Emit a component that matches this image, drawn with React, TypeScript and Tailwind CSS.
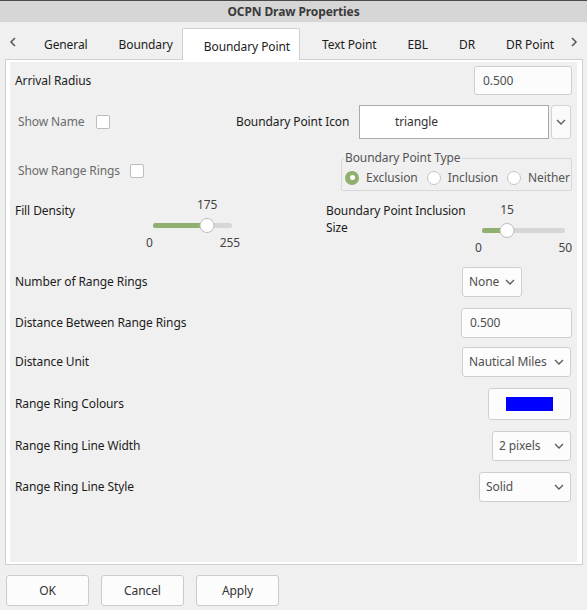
import React from 'react';

const Chevron = () => (
  <svg width="10" height="6" viewBox="0 0 10 6" className="shrink-0">
    <path d="M1 1l4 4 4-4" fill="none" stroke="#5a5a5a" strokeWidth="1.3" />
  </svg>
);

const TabArrow = ({ dir }: { dir: 'left' | 'right' }) => (
  <svg width="8" height="10" viewBox="0 0 8 10">
    <path d={dir === 'left' ? 'M6 1L2 5l4 4' : 'M2 1l4 4-4 4'} fill="none" stroke="#555" strokeWidth="1.5" />
  </svg>
);

const Select = ({ value, className }: { value: string; className: string }) => (
  <div className={`h-[30px] flex items-center justify-between pl-[6px] pr-[6px] bg-[#fcfcfc] border border-[#cfcfcf] rounded-[3px] text-[#505050] ${className}`}>
    <span>{value}</span>
    <Chevron />
  </div>
);

const TextInput = ({ value, className }: { value: string; className: string }) => (
  <div className={`flex items-center pl-[8px] bg-[#fcfcfc] border border-[#cfcfcf] rounded-[3px] text-[#505050] ${className}`}>
    {value}
  </div>
);

const Checkbox = () => (
  <div className="w-[14px] h-[14px] bg-white border border-[#bdbdbd] rounded-[2px] shrink-0" />
);

const Radio = ({ label, checked }: { label: string; checked?: boolean }) => (
  <div className="flex items-center">
    {checked ? (
      <div className="w-[14px] h-[14px] rounded-full bg-[#8fb06f] flex items-center justify-center">
        <div className="w-[5px] h-[5px] rounded-full bg-white" />
      </div>
    ) : (
      <div className="w-[14px] h-[14px] rounded-full bg-white border border-[#c4c4c4]" />
    )}
    <span className="ml-[7px] text-[#555]">{label}</span>
  </div>
);

const Slider = ({ value, min, max, className, trackClass }: { value: number; min: number; max: number; className: string; trackClass: string }) => {
  const pct = `${((value - min) / (max - min)) * 100}%`;
  return (
    <div className={`flex flex-col text-[#444] ${className}`}>
      <div className={`relative h-[14px] ml-[4px] ${trackClass}`}>
        <span className="absolute top-0 -translate-x-1/2 leading-[14px]" style={{ left: pct }}>{value}</span>
      </div>
      <div className={`relative h-[15px] ml-[4px] mt-[6px] flex items-center ${trackClass}`}>
        <div className="h-[5px] w-full rounded-full bg-[#d6d6d6] overflow-hidden">
          <div className="h-full bg-[#8fb06f]" style={{ width: pct }} />
        </div>
        <div className="absolute top-0 w-[15px] h-[15px] -translate-x-1/2 rounded-full bg-white border border-[#bcbcbc]" style={{ left: pct }} />
      </div>
      <div className="flex justify-between mt-[3px] -ml-[3px] leading-[14px]">
        <span>{min}</span>
        <span>{max}</span>
      </div>
    </div>
  );
};

const Row = ({ label, children, className }: { label: string; children: React.ReactNode; className: string }) => (
  <div className={`flex items-center ${className}`}>
    <span>{label}</span>
    {children}
  </div>
);

const tabs = ['General', 'Boundary', 'Boundary Point', 'Text Point', 'EBL', 'DR', 'DR Point'];

export default function App() {
  return (
    <div className="w-[587px] h-[610px] bg-[#f0f0f0] flex flex-col text-[12px] tracking-[-0.1px] text-[#1c1c1c] font-['Noto_Sans',sans-serif] overflow-hidden">
      <div className="h-[22px] border-t border-[#4a4a4a] bg-[#d6d6d6] flex items-center justify-center font-bold text-[#3a3a3a]">
        OCPN Draw Properties
      </div>

      <div className="h-[37px] flex items-end pr-[9px]">
        <div className="w-[22px] h-full pl-[9px] pt-[15px]">
          <TabArrow dir="left" />
        </div>
        {tabs.map((t) => (
          <div
            key={t}
            className={
              t === 'Boundary Point'
                ? 'relative z-10 h-[32px] -mb-px pl-[21px] pr-[9px] pt-[4px] flex items-center bg-white border-x border-t border-[#d0d0d0] rounded-t-[2px]'
                : 'h-[32px] pl-[22px] pr-[9px] pt-[4px] flex items-center'
            }
          >
            {t}
          </div>
        ))}
        <div className="ml-auto h-full pt-[15px]">
          <TabArrow dir="right" />
        </div>
      </div>

      <div className="ml-[5px] w-[578px] h-[506px] border border-[#d0d0d0] bg-white pt-[2px] pb-[2px] pl-[4px] pr-[5px]">
        <div className="h-full bg-[#f0f0f0] pl-[5px] pr-[5px] flex flex-col">
          <Row label="Arrival Radius" className="mt-[4px] h-[29px]">
            <TextInput value="0.500" className="ml-auto w-[98px] h-[29px]" />
          </Row>

          <div className="mt-[10px] h-[34px] flex items-center">
            <div className="w-[221px] flex items-center text-[#6b6b6b]">
              <span className="w-[81px] pl-[3px]">Show Name</span>
              <Checkbox />
            </div>
            <span className="w-[123px]">Boundary Point Icon</span>
            <div className="w-[190px] h-[34px] bg-white border border-[#a9a9a9] flex items-center pl-[35px] text-[#333]">
              triangle
            </div>
            <div className="ml-[2px] w-[20px] h-[34px] bg-[#fafafa] border border-[#d3d3d3] rounded-[3px] flex items-center justify-center">
              <Chevron />
            </div>
          </div>

          <div className="mt-[12px] h-[40px] flex items-start">
            <div className="w-[326px] h-[40px] flex items-center text-[#6b6b6b]">
              <span className="w-[115px] pl-[3px]">Show Range Rings</span>
              <Checkbox />
            </div>
            <fieldset className="w-[231px] border border-[#d8d8d8] rounded-[2px]">
              <legend className="ml-[2px] px-[1px] leading-[14px] text-[#555]">Boundary Point Type</legend>
              <div className="h-[25px] flex items-center pl-[3px] gap-[9px]">
                <Radio label="Exclusion" checked />
                <Radio label="Inclusion" />
                <Radio label="Neither" />
              </div>
            </fieldset>
          </div>

          <div className="h-[64px] flex items-start">
            <span className="w-[134px] shrink-0 mt-[12px] leading-[16px]">Fill Density</span>
            <Slider value={175} min={0} max={255} className="w-[91px] mt-[7px]" trackClass="w-[79px]" />
            <span className="ml-[86px] w-[152px] shrink-0 mt-[11px] leading-[17px]">
              Boundary Point Inclusion<br />Size
            </span>
            <Slider value={15} min={0} max={50} className="w-[94px] mt-[12px]" trackClass="w-[83px]" />
          </div>

          <Row label="Number of Range Rings" className="mt-[12px] h-[30px]">
            <Select value="None" className="ml-auto mr-[50px] w-[60px]" />
          </Row>
          <Row label="Distance Between Range Rings" className="mt-[11px] h-[30px]">
            <TextInput value="0.500" className="ml-auto w-[111px] h-[30px]" />
          </Row>
          <Row label="Distance Unit" className="mt-[9px] h-[30px]">
            <Select value="Nautical Miles" className="ml-auto mr-[1px] w-[109px]" />
          </Row>
          <Row label="Range Ring Colours" className="mt-[11px] h-[32px]">
            <div className="ml-auto mr-[1px] w-[83px] h-[32px] bg-[#fcfcfc] border border-[#cfcfcf] rounded-[3px] flex items-center justify-center">
              <div className="w-[47px] h-[14px] bg-[#0000ff]" />
            </div>
          </Row>
          <Row label="Range Ring Line Width" className="mt-[11px] h-[30px]">
            <Select value="2 pixels" className="ml-auto mr-[1px] w-[79px]" />
          </Row>
          <Row label="Range Ring Line Style" className="mt-[11px] h-[30px]">
            <Select value="Solid" className="ml-auto mr-[1px] w-[92px]" />
          </Row>
        </div>
      </div>

      <div className="mt-[10px] ml-[6px] flex gap-[12px]">
        {['OK', 'Cancel', 'Apply'].map((b) => (
          <div key={b} className="w-[83px] h-[31px] bg-[#fcfcfc] border border-[#cbcbcb] rounded-[3px] flex items-center justify-center text-[#333]">
            {b}
          </div>
        ))}
      </div>
    </div>
  );
}
